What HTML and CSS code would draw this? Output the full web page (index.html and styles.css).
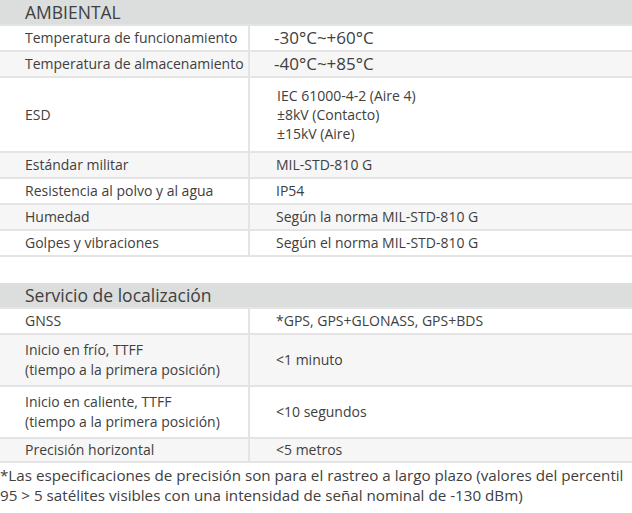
FILE: index.html
```html
<!DOCTYPE html>
<html lang="es">
<head>
<meta charset="utf-8">
<link rel="stylesheet" href="styles.css">
</head>
<body>
<div class="page">
  <section class="spec">
    <div class="head">AMBIENTAL</div>
    <div class="row h26"><div class="k">Temperatura de funcionamiento</div><div class="v big">-30°C~+60°C</div></div>
    <div class="row h26 alt"><div class="k">Temperatura de almacenamiento</div><div class="v big">-40°C~+85°C</div></div>
    <div class="row esd"><div class="k">ESD</div><div class="v multi">IEC 61000-4-2 (Aire 4)<br>±8kV (Contacto)<br>±15kV (Aire)</div></div>
    <div class="row h26 alt"><div class="k">Estándar militar</div><div class="v">MIL-STD-810 G</div></div>
    <div class="row h26"><div class="k">Resistencia al polvo y al agua</div><div class="v">IP54</div></div>
    <div class="row h26 alt"><div class="k">Humedad</div><div class="v">Según la norma MIL-STD-810 G</div></div>
    <div class="row h28 last"><div class="k">Golpes y vibraciones</div><div class="v">Según el norma MIL-STD-810 G</div></div>
  </section>
  <section class="spec second">
    <div class="head">Servicio de localización</div>
    <div class="row h26"><div class="k">GNSS</div><div class="v">*GPS, GPS+GLONASS, GPS+BDS</div></div>
    <div class="row tall alt"><div class="k">Inicio en frío, TTFF<br>(tiempo a la primera posición)</div><div class="v">&lt;1 minuto</div></div>
    <div class="row tall"><div class="k">Inicio en caliente, TTFF<br>(tiempo a la primera posición)</div><div class="v">&lt;10 segundos</div></div>
    <div class="row h26 alt last"><div class="k">Precisión horizontal</div><div class="v">&lt;5 metros</div></div>
  </section>
  <p class="note">*Las especificaciones de precisión son para el rastreo a largo plazo (valores del percentil<br>95 &gt; 5 satélites visibles con una intensidad de señal nominal de -130 dBm)</p>
</div>
</body>
</html>
```

FILE: styles.css
```css
* { box-sizing: border-box; }
html, body { margin: 0; padding: 0; background: #fff; }
body {
  font-family: "Open Sans", "Liberation Sans", sans-serif;
  color: #404040;
  overflow: hidden;
  width: 632px;
  height: 513px;
}
.page { width: 632px; }
.spec { width: 632px; }
.second { margin-top: 26px; }
.head {
  height: 24px;
  background: #dcdddd;
  font-size: 17.5px;
  line-height: 24px;
  padding-left: 25px;
}
.row {
  display: grid;
  grid-template-columns: 250px 1fr;
  border-top: 2px solid #e4e4e4;
  font-size: 14px;
}
.row.last { border-bottom: 2px solid #e4e4e4; }
.row.alt { background: #f6f6f6; }
.k, .v { display: flex; align-items: center; }
.k { padding-left: 25px; border-right: 2px solid #e4e4e4; line-height: 20px; }
.v { padding-left: 26px; line-height: 20px; }
.v.big { font-size: 17px; padding-left: 24px; }
.h26 { height: 26px; }
.h28 { height: 28px; }
.esd { height: 75px; }
.tall { height: 52px; }
.multi { line-height: 19px; padding-left: 27px; }
.note {
  margin: 2px 0 0 0;
  font-size: 15.2px;
  line-height: 20px;
  white-space: nowrap;
}
```
